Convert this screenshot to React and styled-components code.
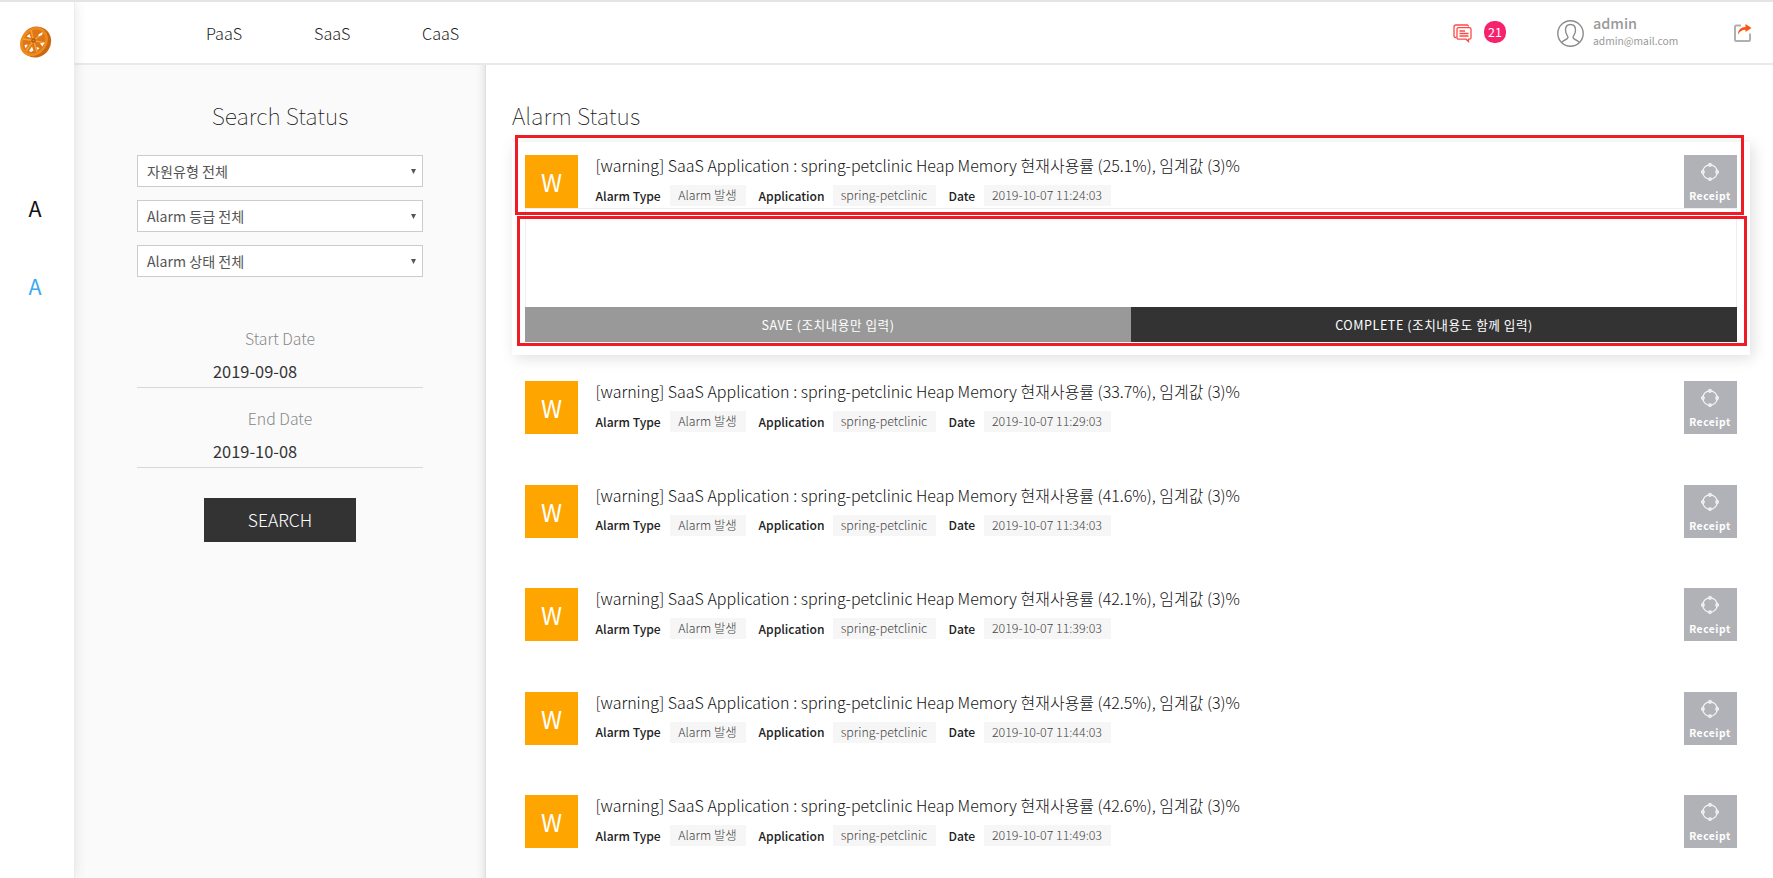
import React from "react";
import styled, { createGlobalStyle } from "styled-components";

const Global = createGlobalStyle`
  *{box-sizing:border-box}
  html,body{margin:0;padding:0;background:#fff;overflow:hidden}
  body{font-family:"Noto Sans CJK KR","Noto Sans",sans-serif;color:#333}
  button{font-family:inherit;border:0;padding:0;margin:0}
`;

const Page = styled.div`
  display:flex;width:1773px;height:878px;border-top:2px solid #e4e4e4;overflow:hidden;background:#fff;
`;
const Rail = styled.nav`
  width:75px;flex:none;display:flex;flex-direction:column;align-items:center;background:#fff;
  border-right:1px solid #ececec;box-shadow:0 0 12px rgba(0,0,0,.1);z-index:2;padding:23px 4px 0 0;
`;
const RailItem = styled.a`
  font-size:21.5px;line-height:30px;color:${p => p.$color};margin-top:${p => p.$gap}px;
`;
const Body = styled.div`flex:1;min-width:0;display:flex;flex-direction:column;`;
const Header = styled.header`
  height:63px;flex:none;border-bottom:2px solid #e9e9e9;display:flex;align-items:flex-start;
  padding:0 21px 0 131px;background:#fff;
`;
const Menu = styled.div`display:flex;flex:1;padding-top:17px;`;
const MenuItem = styled.a`font-size:16.2px;line-height:28px;font-weight:300;width:108px;color:#222;`;
const Alerts = styled.div`display:flex;width:104px;padding-top:19px;gap:12px;align-items:flex-start;`;
const AlertIcon = styled.span`display:flex;padding-top:3px;`;
const Badge = styled.span`
  width:22px;height:22px;border-radius:10px;background:#f6226d;color:#fff;font-size:12.5px;line-height:21px;text-align:center;
`;
const User = styled.div`display:flex;width:176px;padding-top:10px;gap:9px;`;
const UserFace = styled.span`display:flex;padding-top:8px;`;
const UserName = styled.div`font-size:14.4px;line-height:20px;font-weight:500;color:#999;padding-top:1px;`;
const UserMail = styled.div`font-size:10.3px;line-height:15px;color:#999;font-weight:400;`;
const Exit = styled.span`display:flex;padding-top:21px;`;
const Content = styled.div`flex:1;min-height:0;display:flex;`;

const Panel = styled.aside`
  width:411px;flex:none;background:#fafafa;border-right:1px solid #dedede;
  box-shadow:inset -9px 0 9px -8px rgba(0,0,0,.12);padding:32px 62px 0 62px;display:flex;flex-direction:column;
`;
const PanelTitle = styled.h2`margin:0 0 22px;font-size:22.9px;line-height:36px;font-weight:100;text-align:center;color:#111;`;
const Select = styled.div`
  height:32px;border:1px solid #ccc;background:#fff;margin-bottom:13px;padding:0 6px 0 9px;
  display:flex;align-items:center;justify-content:space-between;font-size:14.1px;color:#555;
`;
const DateLabel = styled.div`font-size:15.8px;line-height:24px;font-weight:300;color:#888;text-align:center;margin-top:${p => p.$gap}px;`;
const DateValue = styled.div`
  font-size:16.4px;line-height:24px;padding:8px 0 4px 76px;border-bottom:1px solid #d8d8d8;color:#333;height:37px;
`;
const SearchButton = styled.button`
  width:152px;height:44px;background:#333;color:#fff;font-size:17.5px;line-height:42px;font-weight:300;align-self:center;margin-top:30px;
`;

const Main = styled.main`flex:1;min-width:0;padding:32px 23px 0 26px;`;
const MainTitle = styled.h2`margin:0 0 9px;font-size:23.1px;line-height:36px;font-weight:100;color:#111;`;
const OpenCard = styled.section`
  position:relative;height:213px;padding:13px;background:#fff;box-shadow:3px 3px 14px rgba(0,0,0,.13);margin-bottom:26px;
`;
const Outline = styled.div`
  position:absolute;border:3px solid #ee1c25;left:${p => p.$x}px;top:${p => p.$y}px;width:${p => p.$w}px;height:${p => p.$h}px;
`;
const List = styled.div`padding:0 13px;display:flex;flex-direction:column;gap:50.5px;`;
const Row = styled.article`display:flex;height:53px;`;
const Grade = styled.div`
  width:53px;height:53px;background:#ffa500;color:#fff;font-size:24px;line-height:54px;text-align:center;flex:none;
`;
const Info = styled.div`flex:1;padding-left:17.5px;min-width:0;white-space:nowrap;`;
const InfoTitle = styled.h3`margin:-3px 0 0;font-size:16px;line-height:26px;font-weight:300;color:#111;`;
const Meta = styled.div`display:flex;align-items:center;height:21px;margin-top:7px;`;
const MetaLabel = styled.b`font-size:12.1px;line-height:19px;padding-bottom:1px;font-weight:500;color:#222;width:${p => p.$w}px;flex:none;`;
const Tag = styled.span`
  background:#f6f6f6;height:21px;line-height:21px;width:${p => p.$w}px;text-align:center;margin-right:13px;
  font-size:12.4px;font-weight:300;color:#444;flex:none;
`;
const Receipt = styled.button`
  width:53px;height:53px;background:#b1b2b7;color:#fff;display:flex;flex-direction:column;align-items:center;
  font-size:10.3px;line-height:14px;font-weight:700;letter-spacing:.55px;padding:8px 1px 0 0;gap:8px;
`;
const Note = styled.div`height:99px;border:1px solid #eee;border-bottom:0;`;
const Actions = styled.div`display:flex;height:35px;`;
const Action = styled.button`
  flex:1;background:${p => p.$bg};color:#fff;font-size:12.6px;line-height:34px;letter-spacing:.55px;
`;

const Logo = () => (
  <svg width="34" height="34" viewBox="0 0 34 34">
    <ellipse cx="18" cy="17" rx="14.8" ry="15.8" fill="#c96712" transform="rotate(35 18 17)" />
    <ellipse cx="15.800" cy="16.800" rx="12.800" ry="15.600" fill="#f08a1c" transform="rotate(38 16 17)" />
    <ellipse cx="15.800" cy="16.600" rx="10.300" ry="12.800" fill="#db7718" transform="rotate(38 16 17)" />
    <g stroke="#f7a032" strokeWidth="1.500">
      <path d="M15.500 15.500L13 5M15.500 15.500L25 8M15.500 15.500L27 18M15.500 15.500L19 27M15.500 15.500L8 26M15.500 15.500L5 14" />
    </g>
    <g fill="#fff">
      <path d="M8.500 11.500l3-2.500 1.500 4zM20.500 9.500l4-2.500-.5 3-3.500 1.500zM22 18.500l4.500-1-2 4zM6.500 20l3.500-.5-2.500 4zM11 26l3-4.500 1.500 4-2.500 1.500zM18.500 22l3 1-2 2z" />
    </g>
    <circle cx="15.500" cy="15.500" r="2.200" fill="#a9530f" />
    <circle cx="15.500" cy="15.500" r="1" fill="#ee8a25" />
  </svg>
);
const ChatIcon = () => (
  <svg width="19" height="19" viewBox="0 0 19 19" fill="none" stroke="#fb4a45" strokeWidth="1.300">
    <path d="M3.500 13.500H2.500a1.500 1.500 0 0 1-1.500-1.500V3a2 2 0 0 1 2-2h11a1.500 1.500 0 0 1 1.500 1.500" />
    <path d="M5.500 3.700h11a1.500 1.500 0 0 1 1.500 1.500v8.500a1.500 1.500 0 0 1-1.500 1.500h-1v2.300l-2.500-2.300H5.500A1.500 1.500 0 0 1 4 13.700V5.200a1.500 1.500 0 0 1 1.500-1.500zM6.500 7h5.500M6.500 9.500h9M6.500 12h9" />
  </svg>
);
const Avatar = () => (
  <svg width="27" height="27" viewBox="0 0 27 27" fill="none" stroke="#8c8c8c" strokeWidth="1.400">
    <circle cx="13.500" cy="13.500" r="12.700" />
    <path d="M5 22.500c.5-2.500 5.500-2.500 6-5 .3-1.500-2.500-3-2.500-7.500 0-3.500 2-5.500 5-5.500s5 2 5 5.500c0 4.500-2.800 6-2.500 7.500.5 2.500 5.500 2.500 6 5" />
  </svg>
);
const ExportIcon = () => (
  <svg width="19" height="19" viewBox="0 0 19 19" fill="none">
    <path d="M8 2.500H3a1 1 0 0 0-1 1V17a1 1 0 0 0 1 1h13a1 1 0 0 0 1-1v-6.500" stroke="#b0b0b0" strokeWidth="2" />
    <path d="M5 11.500c0-4.500 3-7.500 7.500-7.500V1L18.500 5l-6 4V6.700C9 6.700 6.800 8.500 5 11.500z" fill="#fb5410" />
  </svg>
);
const Ring = () => (
  <svg width="18" height="18" viewBox="0 0 18 18" fill="none" stroke="#f4f4f5" strokeWidth="1.300">
    <circle cx="9" cy="9" r="7.200" />
    <g fill="#d8d8db"><circle cx="9" cy="1.900" r="1.300" /><circle cx="9" cy="16.100" r="1.300" /><circle cx="1.900" cy="9" r="1.300" /><circle cx="16.100" cy="9" r="1.300" /></g>
  </svg>
);
const Caret = () => <svg width="5" height="5" viewBox="0 0 6 6"><path d="M0 0h6L3 6z" fill="#555" /></svg>;

const AlarmRow = ({ rate, time }) => (
  <Row>
    <Grade>W</Grade>
    <Info>
      <InfoTitle>[warning] SaaS Application : spring-petclinic Heap Memory 현재사용률 ({rate}%), 임계값 (3)%</InfoTitle>
      <Meta>
        <MetaLabel $w={74}>Alarm Type</MetaLabel><Tag $w={76}>Alarm 발생</Tag>
        <MetaLabel $w={74}>Application</MetaLabel><Tag $w={103}>spring-petclinic</Tag>
        <MetaLabel $w={35}>Date</MetaLabel><Tag $w={127}>2019-10-07 {time}</Tag>
      </Meta>
    </Info>
    <Receipt><Ring />Receipt</Receipt>
  </Row>
);

const alarms = [["33.7", "11:29:03"], ["41.6", "11:34:03"], ["42.1", "11:39:03"], ["42.5", "11:44:03"], ["42.6", "11:49:03"]];

export default function App() {
  return (
    <Page>
      <Global />
      <Rail>
        <Logo />
        <RailItem $color="#111" $gap={134}>A</RailItem>
        <RailItem $color="#3fa9f5" $gap={48}>A</RailItem>
      </Rail>
      <Body>
        <Header>
          <Menu><MenuItem>PaaS</MenuItem><MenuItem>SaaS</MenuItem><MenuItem>CaaS</MenuItem></Menu>
          <Alerts><AlertIcon><ChatIcon /></AlertIcon><Badge>21</Badge></Alerts>
          <User><UserFace><Avatar /></UserFace><div><UserName>admin</UserName><UserMail>admin@mail.com</UserMail></div></User>
          <Exit><ExportIcon /></Exit>
        </Header>
        <Content>
          <Panel>
            <PanelTitle>Search Status</PanelTitle>
            {["자원유형 전체", "Alarm 등급 전체", "Alarm 상태 전체"].map(t => <Select key={t}>{t}<Caret /></Select>)}
            <DateLabel $gap={37}>Start Date</DateLabel><DateValue>2019-09-08</DateValue>
            <DateLabel $gap={19}>End Date</DateLabel><DateValue>2019-10-08</DateValue>
            <SearchButton>SEARCH</SearchButton>
          </Panel>
          <Main>
            <MainTitle>Alarm Status</MainTitle>
            <OpenCard>
              <AlarmRow rate="25.1" time="11:24:03" />
              <Note />
              <Actions>
                <Action $bg="#999">SAVE (조치내용만 입력)</Action>
                <Action $bg="#333">COMPLETE (조치내용도 함께 입력)</Action>
              </Actions>
              <Outline $x={3} $y={-7} $w={1229} $h={80} />
              <Outline $x={5} $y={74} $w={1230} $h={130} />
            </OpenCard>
            <List>{alarms.map(([rate, time]) => <AlarmRow key={time} rate={rate} time={time} />)}</List>
          </Main>
        </Content>
      </Body>
    </Page>
  );
}
